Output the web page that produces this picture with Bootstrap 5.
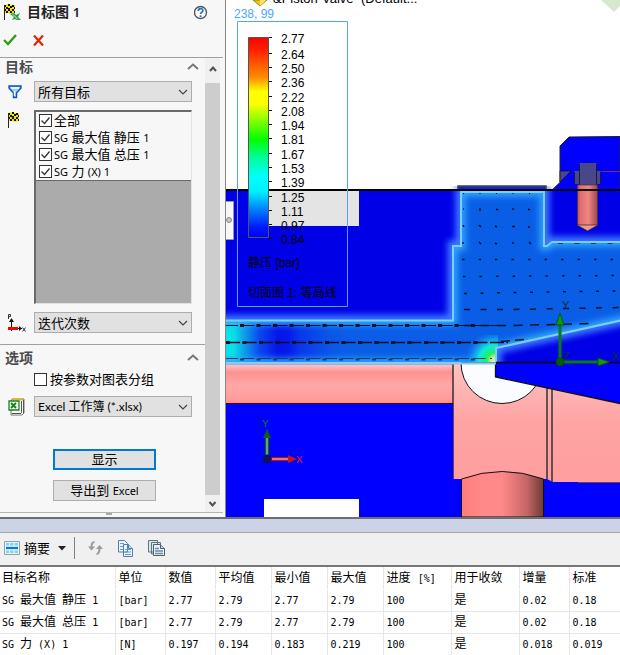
<!DOCTYPE html>
<html lang="zh-CN">
<head>
<meta charset="utf-8">
<meta name="viewport" content="width=device-width, initial-scale=1">
<title>目标图 1</title>
<link href="https://cdn.jsdelivr.net/npm/bootstrap@5.3.0/dist/css/bootstrap.min.css" rel="stylesheet">
<style>
body{font-family:"Noto Sans","Noto Sans CJK SC",sans-serif;font-size:13px;line-height:17px;color:#000;background:#fff}
svg{display:block;flex-shrink:0}
.side-panel{width:226px;background:#f7f7f7;border-right:1px solid #868686}
.latin{font-size:11px}
.panel-title{font-size:14px;line-height:24px;height:24px;font-weight:600;color:#222}
.title-text{padding-left:6px}
.title-num{font-size:13px}
.tool-btn{padding:0;border:0;background:none;display:block}
.confirm-row{height:34px;border-bottom:1px solid #a0a0a0;margin-right:2px;padding-left:3px}
.group-head{height:23px;font-size:14px;line-height:17px;font-weight:700;color:#4a4a4a;padding:0 6px 0 5px}
.options-head{height:27px;padding-top:4px;margin-top:11px;border-top:1px solid #a0a0a0}
.field-row{display:grid;grid-template-columns:34px 1fr;padding-right:13px}
.field-icon{padding-left:7px;padding-top:2px}
.form-select.combo{height:21px;padding:0 20px 0 3px;border:1px solid #adadad;border-radius:0;background-color:#e1e1e1;font-size:13px;line-height:18px;color:#000;background-image:url("data:image/svg+xml,%3Csvg xmlns='http://www.w3.org/2000/svg' viewBox='0 0 10 10'%3E%3Cpath d='M1 3l4 4 4-4' fill='none' stroke='%23444' stroke-width='1.2'/%3E%3C/svg%3E");background-size:10px 10px;background-position:right 3px center}
.form-select.combo-file{font-family:Lato,"Noto Sans CJK SC",sans-serif;font-size:12px}
.goal-list{height:194px;background:#ababab;border:1px solid #e3e3e3;border-top:2px solid #696969;border-left:2px solid #696969}
.goal-items{background:#f7f7f7;border-bottom:1px solid #696969}
.goal-items label{height:17px;padding-left:3px;gap:2px}
.form-check-input.tick{width:13px;height:13px;margin:0;border:1px solid #333;border-radius:0;background-color:#fff;flex-shrink:0}
.form-check-input.tick:checked{background-color:#fff;border-color:#333;background-size:13px 13px;background-image:url("data:image/svg+xml,%3Csvg xmlns='http://www.w3.org/2000/svg' viewBox='0 0 13 13'%3E%3Cpath d='M2.5 6.5l3 3 5-6' fill='none' stroke='%23333' stroke-width='1.3'/%3E%3C/svg%3E")}
.tick-gap{gap:3px}
.push-stack{gap:10px}
.push{height:21px;width:103px;padding:0;border:1px solid #adadad;border-radius:0;background:#e1e1e1;font-size:13px;line-height:17px;color:#000}
.push-main{border:2px solid #0078d7}
.scroll-rail{width:15px;background:#f0f0f0;margin-right:5px}
.scroll-thumb{background:#cdcdcd}
.rail-btn{height:25px;width:15px}
.rail-btn-down{height:17px}
.panel-foot{height:5px;border-top:1px solid #b4b4b4;margin-right:2px}
.panel-grip{width:6px;height:2px;background:#aaa;margin-left:106px}
.scene{flex:1 1 0;min-width:0}
.split-bar{height:16px;background:#cdd3e6;border-top:2px solid #6e6e6e;border-bottom:1px solid #a7a7a7}
.result-bar{height:34px;background:#f0f0f0;border-bottom:2px solid #777;padding:0 0 2px 4px}
.bar-rule{width:1px;height:22px;background:#808080}
.bar-icons{gap:15px;padding-left:5px}
.result-table{table-layout:fixed;font-family:"DejaVu Sans Mono","Noto Sans CJK SC",monospace;font-size:10px;line-height:17px;color:#000;margin:0}
.result-table>:not(caption)>*>*{height:22px;padding:2px 0 2px 3px;border:0;border-right:1px solid #e6e6e6;border-bottom:1px solid #e6e6e6;font-weight:400;white-space:nowrap;background:#fff;color:#000;box-shadow:none}
.result-table>thead>tr>th{border-bottom-color:#fff;font-size:12px}
.result-table>:not(caption)>*>:first-child{padding-left:2px}
.han{font-size:12px}
.mono{font-size:10px}
.legend{font:12px "Liberation Sans","Noto Sans CJK SC",sans-serif}
</style>
<script src="https://cdn.jsdelivr.net/npm/bootstrap@5.3.0/dist/js/bootstrap.bundle.min.js"></script>
</head>
<body>
<svg width="0" height="0" class="position-absolute" aria-hidden="true">
<defs>
<g id="flag"><path d="M1 1l4-1 3 1 4 0v8l-4 1-3-1-4 0z" fill="#f4e400"/><path d="M1 1h2v2H1zM5 0h2v2H5zM9 1h2v2H9zM3 3h2v2H3zM7 2h2v2H7zM11 3h1v2h-1zM1 5h2v2H1zM5 4h2v3H5zM9 5h2v2H9zM3 7h2v2H3zM7 7h2v2H7zM11 7h1v2h-1z" fill="#111"/><path d="M1.500 1v15" stroke="#222" fill="none"/></g>
</defs>
</svg>
<main>
<div class="d-flex">
<aside class="side-panel d-flex flex-column flex-shrink-0">
  <header class="panel-title d-flex align-items-center ps-1">
    <svg width="17" height="17" viewBox="0 0 17 17"><use href="#flag" x="-1"/><path d="M6 10l4-1 2 2 4-2-2 4 3 3-4 0-2-1-3 1 2-3z" fill="#2f9c45"/><path d="M9 10.500l4.500 4.500" stroke="#c9f0c9"/></svg>
    <span class="title-text flex-grow-1">目标图 <span class="title-num">1</span></span>
    <button class="tool-btn me-3" aria-label="帮助"><svg width="15" height="15" viewBox="0 0 15 15"><circle cx="6.500" cy="7.500" r="6" fill="#fff" stroke="#4c5560" stroke-width="1.400"/><path d="M4.300 6c0-3 4.600-3 4.600-.4 0 1.700-2.300 1.600-2.300 3.400" fill="none" stroke="#2272c0" stroke-width="1.700"/><path d="M5.700 10.300h1.800v1.700H5.700z" fill="#2272c0"/></svg></button>
  </header>
  <div class="confirm-row d-flex align-items-center gap-3">
    <button class="tool-btn" aria-label="确定"><svg width="14" height="13" viewBox="0 0 14 13"><path d="M1 6l4 4 8-9" fill="none" stroke="#2f9a12" stroke-width="2.300"/></svg></button>
    <button class="tool-btn" aria-label="取消"><svg width="11" height="12" viewBox="0 0 11 12"><path d="M1 .500l9 10M10 .500l-9 10" stroke="#e02408" stroke-width="2.200"/></svg></button>
  </div>
  <div class="d-flex flex-grow-1">
    <form class="flex-grow-1">
      <div class="group-head d-flex justify-content-between"><span>目标</span><svg class="mt-1" width="12" height="9" viewBox="0 0 12 9"><path d="M1 7l5-4.500L11 7" fill="none" stroke="#777" stroke-width="2"/></svg></div>
      <div class="field-row">
        <div class="field-icon"><svg width="16" height="17" viewBox="0 0 16 17"><path d="M2 3h12v2l-4.500 5v4.500h-3V10L2 5z" fill="#8fd3ff" stroke="#0b4fc0" stroke-width="1.400"/><path d="M4 5h8M7.500 8v5" stroke="#fff" stroke-width="1.400"/></svg></div>
        <select class="form-select combo" aria-label="目标筛选"><option>所有目标</option></select>
      </div>
      <div class="field-row mt-2">
        <div class="field-icon"><svg width="14" height="17" viewBox="0 0 14 17"><use href="#flag"/></svg></div>
        <div class="goal-list"><div class="goal-items">
          <label class="d-flex align-items-center"><input class="form-check-input tick" type="checkbox" checked><span>全部</span></label>
          <label class="d-flex align-items-center"><input class="form-check-input tick" type="checkbox" checked><span><span class="latin">SG</span> 最大值 静压 <span class="latin">1</span></span></label>
          <label class="d-flex align-items-center"><input class="form-check-input tick" type="checkbox" checked><span><span class="latin">SG</span> 最大值 总压 <span class="latin">1</span></span></label>
          <label class="d-flex align-items-center"><input class="form-check-input tick" type="checkbox" checked><span><span class="latin">SG</span> 力 <span class="latin">(X) 1</span></span></label>
        </div></div>
      </div>
      <div class="field-row mt-2">
        <div class="field-icon"><svg width="20" height="19" viewBox="0 0 20 19"><path d="M1.500 5V.500h2v2h-2" fill="none" stroke="#333"/><path d="M4.500 17V6M10 14.500h5" stroke="#111"/><path d="M2 8l2.500-4L7 8zM12 12l3 2.500-3 2.500z" fill="#111"/><path d="M1 13h10v3H1z" fill="#f00"/><path d="M15.500 13.500l3 4M18.500 13.500l-3 4" stroke="#333"/></svg></div>
        <select class="form-select combo" aria-label="横坐标"><option>迭代次数</option></select>
      </div>
      <div class="options-head group-head d-flex justify-content-between"><span>选项</span><svg class="mt-1" width="12" height="9" viewBox="0 0 12 9"><path d="M1 7l5-4.500L11 7" fill="none" stroke="#777" stroke-width="2"/></svg></div>
      <div class="field-row"><span></span><label class="tick-gap d-flex align-items-center"><input class="form-check-input tick" type="checkbox"><span>按参数对图表分组</span></label></div>
      <div class="field-row mt-2">
        <div class="field-icon"><svg width="18" height="18" viewBox="0 0 18 18"><path d="M5 1h12v14l-2 2H4V4z" fill="#fff" stroke="#777"/><path d="M5 1.500h11" stroke="#d8bd16" stroke-width="2"/><path d="M14.500 3v12M16.500 2v13M5 15.500h9" stroke="#555"/><path d="M2 3h10v9H2z" fill="#fff" stroke="#16821d" stroke-width="1.300"/><path d="M4 5l5 5M9 5l-5 5" stroke="#16821d" stroke-width="2"/></svg></div>
        <select class="form-select combo combo-file" aria-label="文件格式"><option>Excel 工作簿 (*.xlsx)</option></select>
      </div>
      <div class="push-stack d-flex flex-column align-items-center ps-1 pt-4 mt-2">
        <button type="button" class="btn push push-main">显示</button>
        <button type="button" class="btn push">导出到 <span class="latin">Excel</span></button>
      </div>
    </form>
    <div class="scroll-rail d-flex flex-column">
      <svg class="rail-btn" viewBox="0 0 15 25"><path d="M5 13l3-3.500 3 3.500" fill="none" stroke="#505050" stroke-width="2"/></svg>
      <div class="scroll-thumb flex-grow-1"></div>
      <svg class="rail-btn rail-btn-down" viewBox="0 0 15 17"><path d="M4.500 7l3 3.500 3-3.500" fill="none" stroke="#505050" stroke-width="2"/></svg>
    </div>
  </div>
  <div class="panel-foot"><div class="panel-grip"></div></div>
</aside>

<svg class="scene" viewBox="226 0 394 517" preserveAspectRatio="xMinYMin slice" role="img" aria-label="静压切面图">
<defs>
<linearGradient id="scale" x1="0" y1="0" x2="0" y2="1"><stop offset="0" stop-color="#f00"/><stop offset=".06" stop-color="#ff1e00"/><stop offset=".2" stop-color="#ff8c00"/><stop offset=".27" stop-color="#ffff00"/><stop offset=".33" stop-color="#ff0"/><stop offset=".41" stop-color="#8cff00"/><stop offset=".51" stop-color="#0f0"/><stop offset=".6" stop-color="#00ff9a"/><stop offset=".7" stop-color="#0ff"/><stop offset=".77" stop-color="#00f0ff"/><stop offset=".86" stop-color="#0080ff"/><stop offset=".95" stop-color="#0018ff"/><stop offset="1" stop-color="#00f"/></linearGradient>
<linearGradient id="duct" gradientUnits="userSpaceOnUse" x1="226" y1="0" x2="350" y2="0"><stop offset="0" stop-color="#00e6e6"/><stop offset=".06" stop-color="#0ae0e8"/><stop offset=".15" stop-color="#0d9de8"/><stop offset=".27" stop-color="#0a48ee"/><stop offset=".42" stop-color="#0614ea"/><stop offset=".5" stop-color="#0618ea"/><stop offset=".6" stop-color="#0838ea"/><stop offset=".85" stop-color="#0a58e6"/><stop offset="1" stop-color="#0a5ee6"/></linearGradient>
<linearGradient id="bore" x1="0" y1="0" x2="0" y2="1"><stop offset="0" stop-color="#ffc4c8"/><stop offset=".2" stop-color="#ff9090"/><stop offset=".55" stop-color="#ffa8a8"/><stop offset=".9" stop-color="#ff9c9c"/><stop offset="1" stop-color="#ff8c8c"/></linearGradient>
<linearGradient id="body" x1="0" y1="0" x2="0" y2="1"><stop offset="0" stop-color="#ffc2c2"/><stop offset=".5" stop-color="#ffa3a3"/><stop offset="1" stop-color="#ff9e9e"/></linearGradient>
<linearGradient id="pipe"><stop offset="0" stop-color="#ff7c7c"/><stop offset=".25" stop-color="#ff8888"/><stop offset=".5" stop-color="#f88"/><stop offset=".8" stop-color="#c46666"/><stop offset="1" stop-color="#6e3838"/></linearGradient>
<linearGradient id="screw"><stop offset="0" stop-color="#b85858"/><stop offset=".15" stop-color="#e07070"/><stop offset=".55" stop-color="#f08484"/><stop offset="1" stop-color="#9a4a4a"/></linearGradient>
<radialGradient id="hot" gradientUnits="userSpaceOnUse" cx="495" cy="361" r="32"><stop offset="0" stop-color="#ffe8c0"/><stop offset=".14" stop-color="#b8f080"/><stop offset=".26" stop-color="#20f060"/><stop offset=".5" stop-color="#10e8d8"/><stop offset=".7" stop-color="#14b0ee" stop-opacity=".7"/><stop offset="1" stop-color="#0a5ee6" stop-opacity="0"/></radialGradient>
<filter id="glow" x="-10%" y="-10%" width="120%" height="120%"><feGaussianBlur stdDeviation="3"/></filter>
<path id="flow" d="M216 320.500H453V246h8V192h83v54h3l5-4h80v76L496 348v15H216z"/>
<clipPath id="flowClip"><use href="#flow"/></clipPath>
</defs>
<path d="M226 0h394v517H226z" fill="#fff"/>
<path d="M601 0h19v6l-6 6z" fill="#d5e9cf"/>
<path d="M253 0l7 6 7-6z" fill="#f5c400" stroke="#806000" stroke-width=".7"/><path d="M260 0v6l6-6z" fill="#ffe766"/>
<text y="3" font-size="13" font-family="Liberation Sans"><tspan x="273">&amp;Piston</tspan><tspan x="322">Valve</tspan><tspan x="361">(Default...</tspan></text>
<path d="M226 190h394v173H226z" fill="#0000e6"/>
<path d="M226 363h394v154H226z" fill="#00f"/>
<path d="M264 190h95v36h-95z" fill="#e4e4e4"/>
<path d="M264 499h95v18h-95z" fill="#fff"/>
<!-- cover block and screw -->
<path d="M620 136.500l-51 .500-9 9v36.500l-8 7.500h68z" fill="#00f" stroke="#222"/>
<path d="M560 171h11l-11 11z" fill="#484890" stroke="#111" stroke-width=".7"/>
<path d="M602 171.500h18" stroke="#803048"/>
<path d="M574 171h27v13h-27zM579.500 163h17v22h-17z" fill="#484888"/><path d="M574.500 172v12M600.500 172v12M579.500 164v20M596.500 164v20" stroke="#191940"/>
<!-- fluid region -->
<use href="#flow" fill="none" stroke="#3a78ff" stroke-width="11" filter="url(#glow)"/>
<path d="M452 178h100v8H452z" fill="#fff"/><path d="M458 186h88v4h-88z" fill="#0a28d8"/><path d="M458 189.500V186h88v3.500" fill="none" stroke="#444" stroke-width="1.500"/>
<path d="M226 190h394" stroke="#000" stroke-width="2"/>
<path d="M577.500 185h20v41h-20z" fill="url(#screw)" stroke="#602c2c" stroke-width=".7"/><path d="M577 225h21l-10.500 6z" fill="#f09890" stroke="#222" stroke-width=".7"/><path d="M577 190h21" stroke="#111" stroke-width="2"/>
<use href="#flow" fill="#0a5ee6"/>
<g clip-path="url(#flowClip)">
<path d="M226 320h140v43H226z" fill="url(#duct)"/>
<use href="#flow" fill="none" stroke="#32a4fa" stroke-width="9" filter="url(#glow)"/>
<path d="M460 335h38v28h-38z" fill="url(#hot)"/>
</g>
<use href="#flow" fill="none" stroke="#78ceff" stroke-width="2"/>
<!-- flow vectors -->
<g stroke="#001028" fill="none">
<path d="M226 325.500h278" stroke-dasharray="12 4.500"/><path d="M240 325.500h240" stroke-width="3" stroke-dasharray="4 12.500"/>
<path d="M226 342.500h282" stroke-width="1.500" stroke-dasharray="14 2.500"/><path d="M226 342.500h254" stroke-width="3" stroke-dasharray="4 12.500"/>
<path d="M226 358.500h266" stroke-dasharray="12 4.500" stroke="#163e70"/><path d="M240 359.500h240" stroke-width="2" stroke-dasharray="4 12.500" stroke="#163e70"/>
<path d="M463 193.500h70" stroke-dasharray="1 15.500"/>
<path d="M480 208v3M496 209l2 1M513 208v2M528 209l2 1M463 209h1M479 225l2 2M495 226l2 1M512 226.500h3M528 227h2M463 225l1 2M479 242l2 2M495 243l2 1M512 243h2M529 242l2 2M462 243h2" stroke-width="1.500"/>
<path d="M558 243.500h62" stroke="#163e70" stroke-dasharray="5 11.500"/>
<path d="M462 259.500h158M463 276.500l157-1" stroke-width="1.500" stroke-dasharray="2.500 14"/>
<path d="M464 293.500l48-1 108-1.500" stroke-width="1.500" stroke-dasharray="3 13.500"/>
<path d="M464 309.500l48 0 108-2" stroke-width="1.500" stroke-dasharray="6 10.500"/>
<path d="M464 325.500h48l80-2" stroke-width="1.500" stroke-dasharray="9 7.500"/>
<path d="M501 341.500l23-2" stroke-width="1.500" stroke-dasharray="9 5"/>
</g>
<!-- machined parts -->
<path d="M226 364.500h227V403H226z" fill="url(#bore)"/><path d="M226 403.500h227" stroke="#400"/>
<path d="M453 364h94v115h-94z" fill="url(#body)"/><path d="M547 364h73v118h-67l-6-3z" fill="url(#body)"/>
<path d="M461.500 479q40.500-15 82 0v38h-82z" fill="url(#pipe)" stroke="#111"/>
<path d="M453 364v39M547 364v115M552 364v118" stroke="#333" stroke-width="1.500"/><path d="M453.500 403v76M578 482.500h42" stroke="#7a4040"/>
<path d="M461 363a41 40.500 0 0 0 82 0z" fill="#fbfcff" stroke="#111"/>
<path d="M496 363h124v40.500L496 377z" fill="#00f"/><path d="M495.500 363v14L620 403.500" fill="none" stroke="#111" stroke-width="1.300"/>
<path d="M226 363.500h270" stroke="#8bc8f2" stroke-width="2"/><path d="M496 362.500h124" stroke="#000" stroke-width="1.500"/>
<!-- model origin -->
<g fill="#0a9a0a" stroke="#054405" stroke-width=".7"><path d="M560 360V324M562 362h38" stroke="#0a7a14" stroke-width="3"/><path d="M556 325l4-12 4 12zM598 358l12 4-12 4z"/><circle cx="560" cy="362" r="4" fill="#065c06"/></g>
<g font-family="Liberation Sans" font-size="11" fill="#07352c"><text x="562" y="309">Y</text><text x="563" y="360">Z</text><text x="612" y="360">X</text></g>
<!-- view triad -->
<path d="M267 456V437" stroke="#116011" stroke-width="4"/><path d="M267 455V438" stroke="#5cae5c" stroke-width="2"/><path d="M263 438l4-9 4 9z" fill="#145c14"/>
<path d="M271 459h18" stroke="#b01414" stroke-width="4"/><path d="M272 459h17" stroke="#f07070" stroke-width="2"/><path d="M288 455l9 4-9 4z" fill="#c01818"/><circle cx="267" cy="459" r="4.500" fill="#101060"/>
<g font-family="Liberation Mono" font-size="11"><text x="262" y="427" fill="#0a7a2a">Y</text><text x="296" y="463" fill="#f01030">X</text></g>
<!-- legend -->
<path d="M237.500 21.500h110v285h-110z" fill="none" stroke="#4da6ff"/>
<path d="M248.500 37.500h20v200h-20z" fill="url(#scale)" stroke="#555"/>
<path d="M269 37.500h3M269 53.500h3M269 67.500h3M269 81.500h3M269 96.500h3M269 110.500h3M269 124.500h3M269 138.500h3M269 153.500h3M269 167.500h3M269 181.500h3M269 196.500h3M269 210.500h3M269 224.500h3M269 238.500h3" stroke="#111"/>
<g class="legend"><text x="234" y="18" fill="#4da6ff">238, 99</text>
<text x="281" y="43">2.77</text><text x="281" y="59">2.64</text><text x="281" y="73">2.50</text><text x="281" y="87">2.36</text><text x="281" y="102">2.22</text><text x="281" y="116">2.08</text><text x="281" y="130">1.94</text><text x="281" y="144">1.81</text><text x="281" y="159">1.67</text><text x="281" y="173">1.53</text><text x="281" y="187">1.39</text><text x="281" y="202">1.25</text><text x="281" y="216">1.11</text><text x="281" y="230">0.97</text><text x="281" y="244">0.84</text>
<text x="248" y="267">静压 [bar]</text><text x="248" y="297">切面图 1: 等高线</text></g>
<!-- flyout handle -->
<path d="M225 201.500h8.500v38H225z" fill="#f7f7f7" stroke="#999"/><circle cx="229" cy="220" r="2.500" fill="#c8c8c8" stroke="#8a8a8a"/>
</svg>
</div>

<div class="split-bar"></div>
<div class="result-bar d-flex align-items-center">
  <button class="tool-btn d-flex align-items-center gap-1"><svg width="16" height="16" viewBox="0 0 16 16"><path d="M.5 1.500h15v13H.5z" fill="#e8f4fc" stroke="#8fa2b0"/><path d="M2 3h12v10H2z" fill="#7fd2fa"/><path d="M2 6h12M2 10h12M5.500 3v10M10 3v10" stroke="#e8f8ff"/><path d="M2 8h12" stroke="#1276d8" stroke-width="2"/></svg><span>摘要</span><svg class="ms-1" width="8" height="5" viewBox="0 0 8 5"><path d="M0 0h8L4 4.500z" fill="#222"/></svg></button>
  <div class="bar-rule mx-2"></div>
  <div class="bar-icons d-flex align-items-center">
    <button class="tool-btn" aria-label="刷新"><svg width="15" height="14" viewBox="0 0 15 14"><path d="M6.500 1C4 1 3.500 3 3.500 6M8.500 13c2.500 0 3-2 3-6" fill="none" stroke="#9a9a9a" stroke-width="2"/><path d="M0 5.500h7L3.500 9.500zM8 8h7l-3.500-4z" fill="#9a9a9a"/></svg></button>
    <button class="tool-btn" aria-label="复制"><svg width="15" height="17" viewBox="0 0 15 17"><path d="M.5.500h6l3 3V12h-9zM5.500 4.500h5l4 4v8h-9z" fill="#e9f3fd" stroke="#527fae"/><path d="M2 3.500h4M2 6.500h3M2 9.500h3M7 9.500h6M7 12h6M7 14.500h6" stroke="#6c9ccc"/><path d="M10.500 4.500v4h4" fill="#c2daf2" stroke="#527fae"/></svg></button>
    <button class="tool-btn" aria-label="全部复制"><svg width="17" height="16" viewBox="0 0 17 16"><path d="M.5.500h9V12h-9zM3.500 2.500h9V14h-9z" fill="#dce5ea" stroke="#5f7480"/><path d="M5.500 4.500h7l4 4v7h-11z" fill="#e8f1f7" stroke="#4b6070"/><path d="M7 8.500h4M7 11h8M7 13.500h8" stroke="#6f8ca0" stroke-width="1.300"/><path d="M12.500 4.500v4h4" fill="#b9cddd" stroke="#4b6070"/></svg></button>
  </div>
</div>
<table class="table result-table w-100">
<colgroup><col width="115"><col width="50"><col width="50"><col width="56"><col width="56"><col width="56"><col width="68"><col width="68"><col width="50"><col width="51"></colgroup>
<thead><tr><th>目标名称</th><th>单位</th><th>数值</th><th>平均值</th><th>最小值</th><th>最大值</th><th>进度 <span class="mono">[%]</span></th><th>用于收敛</th><th>增量</th><th>标准</th></tr></thead>
<tbody>
<tr><td>SG <span class="han">最大值</span> <span class="han">静压</span> 1</td><td>[bar]</td><td>2.77</td><td>2.79</td><td>2.77</td><td>2.79</td><td>100</td><td><span class="han">是</span></td><td>0.02</td><td>0.18</td></tr>
<tr><td>SG <span class="han">最大值</span> <span class="han">总压</span> 1</td><td>[bar]</td><td>2.77</td><td>2.79</td><td>2.77</td><td>2.79</td><td>100</td><td><span class="han">是</span></td><td>0.02</td><td>0.18</td></tr>
<tr><td>SG <span class="han">力</span> (X) 1</td><td>[N]</td><td>0.197</td><td>0.194</td><td>0.183</td><td>0.219</td><td>100</td><td><span class="han">是</span></td><td>0.018</td><td>0.019</td></tr>
</tbody>
</table>
</main>
</body>
</html>
